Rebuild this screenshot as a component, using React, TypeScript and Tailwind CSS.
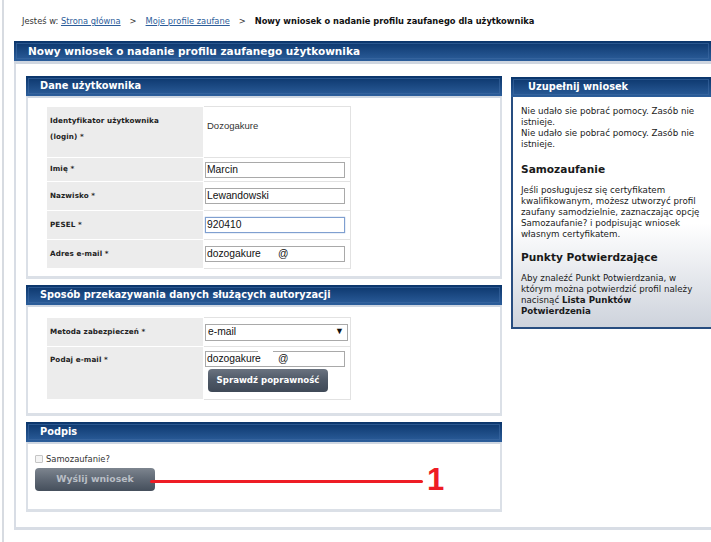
import React from 'react';

const font = "font-['DejaVu_Sans',Verdana,sans-serif]";

const Bar: React.FC<{ title: string; className?: string; big?: boolean; pad?: string }> = ({ title, className = '', big, pad = 'pl-[10px]' }) => (
  <div className={`h-[20px] bg-linear-to-b from-[#0a356b] to-[#2c5e9b] p-[2px] ${className}`}>
    <div className={`h-full border border-[#3d6aa3]/60 flex items-center ${pad}`}>
      <span className={`text-white font-bold ${big ? 'text-[10.5px]' : 'text-[9.8px]'} leading-none whitespace-nowrap`}>
        {title}
      </span>
    </div>
  </div>
);

const Label: React.FC<{ children: React.ReactNode; className?: string }> = ({ children, className = '' }) => (
  <td className={`bg-[#ececec] border border-white align-middle pl-[3px] pr-1 text-[7.2px] font-bold text-[#222] tracking-[0.1px] w-[157px] ${className}`}>
    {children}
  </td>
);

const TextInput: React.FC<{ value: string; focus?: boolean }> = ({ value, focus }) => (
  <div
    className={`h-[16px] w-[140px] border ${focus ? 'border-[#7f9fd0] shadow-[0_0_1px_#7f9fd0]' : 'border-[#a9a9a9]'} bg-white flex items-center px-[1px] font-['Liberation_Sans',Arial,sans-serif] text-[10.3px] text-[#111] whitespace-pre`}
  >
    {value}
  </div>
);

const Section: React.FC<{ title: string; children: React.ReactNode; className?: string }> = ({ title, children, className = '' }) => (
  <div className={className}>
    <Bar title={title} pad="pl-[11px]" />
    <div className="border-l-2 border-r-2 border-b-[3px] border-[#dbe0e7] border-t-2 border-t-[#cfd7e2]">{children}</div>
  </div>
);

const DarkButton: React.FC<{ label: string; disabled?: boolean; className?: string; size?: string }> = ({
  label,
  disabled,
  className = '',
  size = 'text-[9.3px]',
}) => (
  <div
    className={`rounded-[4px] bg-linear-to-b ${disabled ? 'from-[#7d858f] via-[#5f6874] to-[#454f5c]' : 'from-[#6a7380] via-[#4e5866] to-[#3f4957]'} flex items-center justify-center font-bold ${size} whitespace-nowrap ${disabled ? 'text-[#b9bec5]' : 'text-white'} ${className}`}
  >
    {label}
  </div>
);

export default function App() {
  return (
    <div className={`${font} w-[711px] h-[542px] overflow-hidden bg-white relative`}>
      <div className="ml-[2px] h-full border-l-2 border-[#d7dbe1] flex flex-col">
        {/* breadcrumb */}
        <div className="h-[41px] pt-[15px] pl-[18px] text-[8.3px] text-[#333] whitespace-nowrap">
          Jesteś w: <span className="text-[#2d5d9a] underline">Strona główna</span>
          <span className="mx-[9px]">&gt;</span>
          <span className="text-[#2d5d9a] underline">Moje profile zaufane</span>
          <span className="mx-[9px]">&gt;</span>
          <span className="font-bold text-[#111]">Nowy wniosek o nadanie profilu zaufanego dla użytkownika</span>
        </div>

        {/* main panel */}
        <div className="ml-[10px] flex flex-col">
          <Bar title="Nowy wniosek o nadanie profilu zaufanego użytkownika" big pad="pl-[11px]" />
          <div className="h-[3px] bg-[#cfd6e0]" />
          <div className="border-l-2 border-b-[3px] border-[#d8dde5] h-[466px] flex gap-[9px] pt-[12px] pl-[10px]">
            {/* left column */}
            <div className="w-[476px] flex flex-col">
              <Section title="Dane użytkownika">
                <div className="pt-[8px] pb-[7px] pl-[18px]">
                  <table className="border-collapse">
                    <tbody>
                      <tr className="h-[51px]">
                        <Label className="!align-top leading-[16px] pt-[6px]">
                          Identyfikator użytkownika
                          <br />
                          (login) *
                        </Label>
                        <td className="border border-[#e2e2e2] bg-white w-[147px] pl-[3px] font-['Liberation_Sans',Arial,sans-serif] text-[9.5px] text-[#333] align-top pt-[12px]">
                          Dozogakure
                        </td>
                      </tr>
                      {[
                        ['Imię *', 'Marcin', false, 'h-[24px]'],
                        ['Nazwisko *', 'Lewandowski', false, 'h-[29px]'],
                        ['PESEL *', '920410', true, 'h-[29px]'],
                        ['Adres e-mail *', 'dozogakure      @', false, 'h-[29px]'],
                      ].map(([l, v, f, h]) => (
                        <tr key={l as string} className={h as string}>
                          <Label>{l}</Label>
                          <td className="border border-[#e2e2e2] bg-white pl-[1px] align-middle">
                            <TextInput value={v as string} focus={f as boolean} />
                          </td>
                        </tr>
                      ))}
                    </tbody>
                  </table>
                </div>
              </Section>

              <Section title="Sposób przekazywania danych służących autoryzacji" className="mt-[6px]">
                <div className="pt-[10px] pb-[13px] pl-[18px]">
                  <table className="border-collapse">
                    <tbody>
                      <tr className="h-[29px]">
                        <Label>Metoda zabezpieczeń *</Label>
                        <td className="border border-[#e2e2e2] bg-white w-[147px] pl-[1px] align-middle">
                          <div className="h-[17px] w-[143px] border border-[#a9a9a9] flex items-center justify-between px-[2px] font-['Liberation_Sans',Arial,sans-serif] text-[10.3px] text-[#111]">
                            <span>e-mail</span>
                            <span className="text-[9px] pr-[1px]">▼</span>
                          </div>
                        </td>
                      </tr>
                      <tr className="h-[53px]">
                        <Label className="!align-top pt-[8px]">Podaj e-mail *</Label>
                        <td className="border border-[#e2e2e2] bg-white pl-[1px] align-top pt-[4px]">
                          <div className="relative">
                            <TextInput value="dozogakure      @" />
                            <div className="absolute left-[53px] top-0 w-[15px] h-[1px] bg-white" />
                          </div>
                          <DarkButton
                            label="Sprawdź poprawność"
                            size="text-[8.6px]"
                            className="mt-[2px] ml-[3px] w-[120px] h-[23px]"
                          />
                        </td>
                      </tr>
                    </tbody>
                  </table>
                </div>
              </Section>

              <Section title="Podpis" className="mt-[6px]">
                <div className="h-[65px] pl-[7px] pt-[9px]">
                  <div className="flex items-center gap-[3px] text-[8.4px] text-[#333]">
                    <div className="w-[8px] h-[8px] border border-[#c5c5c5] rounded-[1px] bg-[#f4f4f4]" />
                    <span>Samozaufanie?</span>
                  </div>
                  <DarkButton label="Wyślij wniosek" disabled className="mt-[2px] w-[120px] h-[23px]" />
                </div>
              </Section>
            </div>

            {/* right column */}
            <div className="flex-1 pt-[1px]">
              <Bar title="Uzupełnij wniosek" pad="pl-[14px]" />
              <div className="border-l-2 border-b-2 border-[#284d80] h-[232px] bg-linear-to-b from-white from-55% to-[#ced3dc] pl-[8px] pt-[9px] text-[8.7px] leading-[11px] text-[#1a1a1a] whitespace-nowrap">
                <p>
                  Nie udało sie pobrać pomocy. Zasób nie
                  <br />
                  istnieje.
                </p>
                <p>
                  Nie udało sie pobrać pomocy. Zasób nie
                  <br />
                  istnieje.
                </p>
                <p className="font-bold text-[10.6px] mt-[12px] mb-[9px] leading-[14px]">Samozaufanie</p>
                <p>
                  Jeśli posługujesz się certyfikatem
                  <br />
                  kwalifikowanym, możesz utworzyć profil
                  <br />
                  zaufany samodzielnie, zaznaczając opcję
                  <br />
                  Samozaufanie? i podpisując wniosek
                  <br />
                  własnym certyfikatem.
                </p>
                <p className="font-bold text-[10.6px] mt-[10px] mb-[9px] leading-[14px]">Punkty Potwierdzające</p>
                <p>
                  Aby znaleźć Punkt Potwierdzania, w
                  <br />
                  którym można potwierdzić profil należy
                  <br />
                  nacisnąć <b>Lista Punktów</b>
                  <br />
                  <b>Potwierdzenia</b>
                </p>
              </div>
            </div>
          </div>
        </div>
      </div>

      {/* annotation */}
      <div className="absolute left-[150px] top-[480px] w-[273px] h-[3px] rounded-full bg-[#ee1c25]" />
      <div className="absolute left-[427px] top-[464px] text-[31px] font-bold leading-none text-[#ee1c25] font-['Liberation_Sans',Arial,sans-serif]">
        1
      </div>
    </div>
  );
}
